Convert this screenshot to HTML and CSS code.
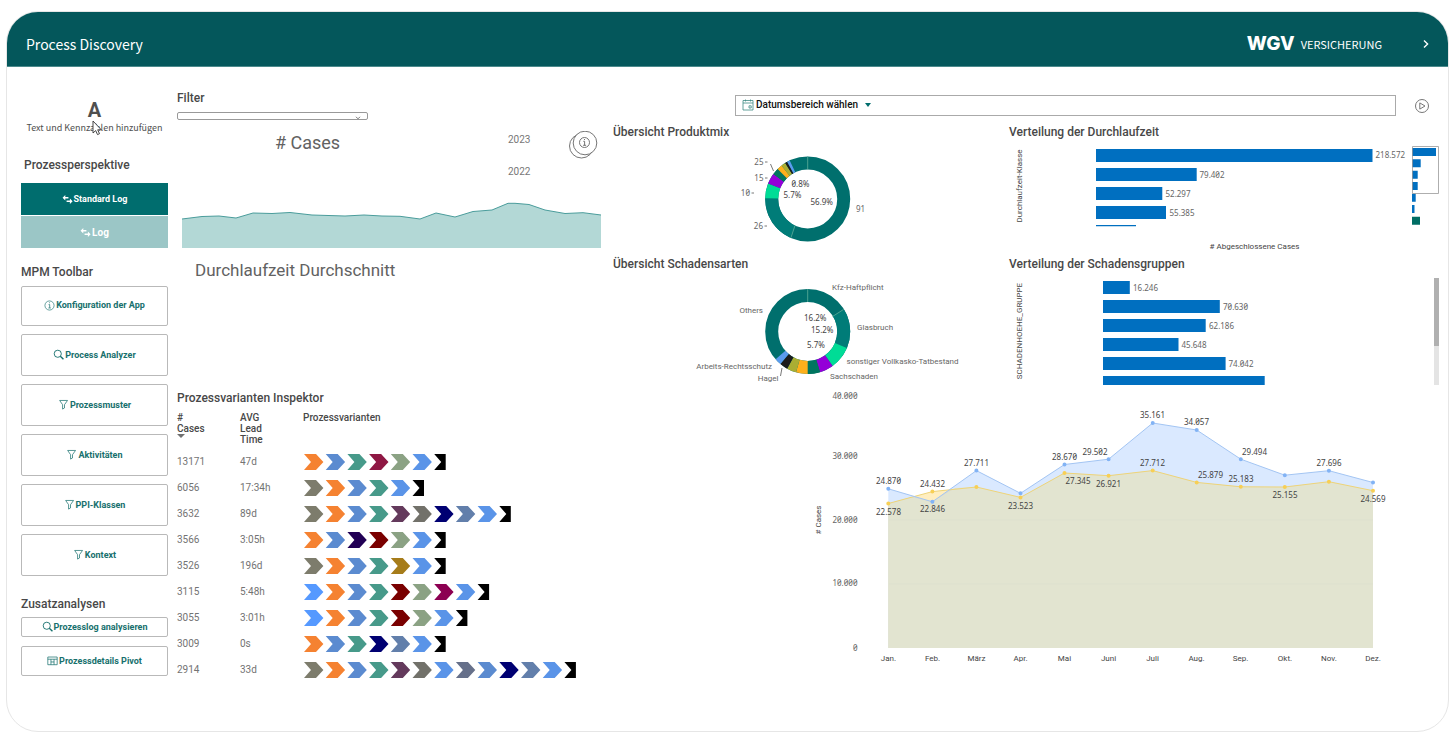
FILE: index.html
```html
<!DOCTYPE html>
<html lang="de">
<head>
<meta charset="utf-8">
<title>Process Discovery</title>
<link rel="stylesheet" href="styles.css">
</head>
<body>
<svg class="defs" aria-hidden="true">
  <symbol id="i-swap" viewBox="0 0 12 12"><path d="M3.600 1v2.200H7v1.600H3.600V7L.6 4zM8.600 5v2.200H5v1.600h3.600V11l3-3z" fill="currentColor"/></symbol>
  <symbol id="i-info" viewBox="0 0 12 12"><circle cx="6" cy="6" r="5" fill="none" stroke="currentColor" stroke-width=".7"/><path d="M5 5h1.200v3.600M4.800 8.700h2.600M5.600 3h.9" fill="none" stroke="currentColor" stroke-width=".8"/></symbol>
  <symbol id="i-search" viewBox="0 0 12 12"><circle cx="5.200" cy="5.200" r="3.900" fill="none" stroke="currentColor"/><path d="M8 8l3.400 3.200" stroke="currentColor" stroke-width="1.500"/></symbol>
  <symbol id="i-funnel" viewBox="0 0 12 12"><path d="M1.800 1.600h8.600L7.100 6.200v3.600L5 11V6.200z" fill="none" stroke="currentColor" stroke-width=".8"/></symbol>
  <symbol id="i-table" viewBox="0 0 12 12"><path d="M.9 2.200h10.200v8.400H.9zM.9 4.600h10.200M4.300 4.600v6M7.700 4.600v6M4.300 7.600h3.400" fill="none" stroke="currentColor" stroke-width=".8"/></symbol>
</svg>

<div class="app">
  <header class="topbar">
    <h1>Process Discovery</h1>
    <div class="brand"><strong>WGV</strong><span>VERSICHERUNG</span></div>
    <button class="next" aria-label="Weiter"><svg viewBox="0 0 8 10"><path d="M2 1.500L5.600 5 2 8.500" fill="none" stroke="#fff" stroke-width="1.400"/></svg></button>
  </header>

  <main class="sheet">
    <aside class="side">
      <div class="placeholder">
        <b>A</b>
        <p>Text und Kennzahlen hinzufügen</p>
        <svg class="cursor" viewBox="0 0 10 16"><path d="M1 1v12l2.700-2.400 1.800 4 2-.9-1.800-3.900h3.600z" fill="#fff" stroke="#333" stroke-width=".9"/></svg>
      </div>
      <h2 class="indent">Prozessperspektive</h2>
      <div class="logs">
        <button class="log on"><svg><use href="#i-swap"/></svg>Standard Log</button>
        <button class="log large"><svg><use href="#i-swap"/></svg>Log</button>
      </div>
      <h2 class="spaced">MPM Toolbar</h2>
      <div class="tools">
        <button class="tool first"><svg><use href="#i-info"/></svg>Konfiguration der App</button>
        <button class="tool"><svg><use href="#i-search"/></svg>Process Analyzer</button>
        <button class="tool"><svg><use href="#i-funnel"/></svg>Prozessmuster</button>
        <button class="tool"><svg><use href="#i-funnel"/></svg>Aktivitäten</button>
        <button class="tool"><svg><use href="#i-funnel"/></svg>PPI-Klassen</button>
        <button class="tool"><svg><use href="#i-funnel"/></svg>Kontext</button>
      </div>
      <h2 class="spaced">Zusatzanalysen</h2>
      <div class="extras">
        <button class="tool slim"><svg><use href="#i-search"/></svg>Prozesslog analysieren</button>
        <button class="tool medium"><svg><use href="#i-table"/></svg>Prozessdetails Pivot</button>
      </div>
    </aside>

    <section class="middle">
      <h2><label for="filter">Filter</label></h2>
      <div class="filter">
        <select id="filter"></select>
        <svg viewBox="0 0 6 4"><path d="M1 .8l2 2 2-2" fill="none" stroke="#555" stroke-width=".8"/></svg>
      </div>
      <div class="kpi">
        <h3># Cases</h3>
        <ul class="years"><li>2023</li><li>2022</li></ul>
        <button class="info" aria-label="Info"><svg viewBox="0 0 30 28"><g fill="#fff" stroke="#666" stroke-width=".9"><circle cx="12.500" cy="15" r="12"/><circle cx="16" cy="12" r="11.800"/><circle cx="15.500" cy="11.500" r="5"/></g><path d="M14.300 10.300h1.300v4M14.100 14.300h3M15 8.500h1" fill="none" stroke="#666" stroke-width=".9"/></svg></button>
      </div>
      <svg class="chart" viewBox="177 200 427 50" role="img" aria-label="Cases Verlauf">
        <path d="M182 248V219L202 216.500L219 216L236 218L253 213L272 213.500L290 212.500L312 215L345 216L364 215L382 216L400 216.300L420 219L436 213L455 217L473 211.500L492 210L508 203.300L515 203.300L529 204.500L545 210L565 213.500L583 212.700L601 215V248z" fill="#b3d8d6"/>
        <path d="M182 219L202 216.500L219 216L236 218L253 213L272 213.500L290 212.500L312 215L345 216L364 215L382 216L400 216.300L420 219L436 213L455 217L473 211.500L492 210L508 203.300L515 203.300L529 204.500L545 210L565 213.500L583 212.700L601 215" fill="none" stroke="#4a9c9b"/>
      </svg>
      <h3 class="lead">Durchlaufzeit Durchschnitt</h3>
      <h2>Prozessvarianten Inspektor</h2>
      <table class="variants">
        <thead><tr><th># Cases<i class="sort"></i></th><th>AVG Lead Time</th><th>Prozessvarianten</th></tr></thead>
        <tbody id="variants"></tbody>
      </table>
    </section>

    <section class="right">
      <div class="daterow">
        <button class="datebar"><svg class="cal" viewBox="0 0 12 12"><path d="M1 1.500h10v9.500H1zM1 4h10M3.500 .5v2M8.500 .5v2M7 6.800h2.200v2.200H7z" fill="none" stroke="#3d8a84" stroke-width=".8"/></svg>Datumsbereich wählen<svg class="caret" viewBox="0 0 6 4"><path d="M0 0h6L3 4z" fill="#006d6d"/></svg></button>
        <button class="play" aria-label="Abspielen"><svg viewBox="0 0 16 16"><circle cx="8" cy="8" r="6.500" fill="none" stroke="#777"/><path d="M5.800 4.900v6.200L11 8z" fill="none" stroke="#777"/></svg></button>
      </div>

      <div class="cards">
        <article>
          <h2>Übersicht Produktmix</h2>
          <svg class="chart" viewBox="613 142 387 112" role="img" aria-label="Übersicht Produktmix">
            <g class="ring" transform="rotate(-90 807.700 199)">
              <circle cx="807.700" cy="199" r="36" pathLength="360" stroke="#006f6d"/>
              <circle cx="807.700" cy="199" r="36" pathLength="360" stroke="#007c78" stroke-dasharray="66 294" stroke-dashoffset="-205"/>
              <circle cx="807.700" cy="199" r="36" pathLength="360" stroke="#00dc96" stroke-dasharray="20.500 339.500" stroke-dashoffset="-271"/>
              <circle cx="807.700" cy="199" r="36" pathLength="360" stroke="#9400d8" stroke-dasharray="14.500 345.500" stroke-dashoffset="-291.500"/>
              <circle cx="807.700" cy="199" r="36" pathLength="360" stroke="#00755f" stroke-dasharray="9 351" stroke-dashoffset="-306"/>
              <circle cx="807.700" cy="199" r="36" pathLength="360" stroke="#fdb01c" stroke-dasharray="7 353" stroke-dashoffset="-315"/>
              <circle cx="807.700" cy="199" r="36" pathLength="360" stroke="#aaae33" stroke-dasharray="6 354" stroke-dashoffset="-322"/>
              <circle cx="807.700" cy="199" r="36" pathLength="360" stroke="#1c1c1c" stroke-dasharray="3 357" stroke-dashoffset="-328"/>
              <circle cx="807.700" cy="199" r="36" pathLength="360" stroke="#5a9bee" stroke-dasharray="4 356" stroke-dashoffset="-331"/>
            </g>
            <path d="M807.700 156.500v13M791 237.500l4-12" stroke="#5fb09a" stroke-width=".8"/>
            <path d="M770.500 164l3 7M765 162h2.500M765 178h2.500M751.500 193h2.500M764.500 226h2.500" stroke="#555" stroke-width=".8" fill="none"/>
            <g class="num"><text x="763.500" y="165" text-anchor="end">25</text><text x="763.500" y="181" text-anchor="end">15</text><text x="750" y="196" text-anchor="end">10</text><text x="763" y="229" text-anchor="end">26</text><text x="856" y="212">91</text><text class="d" x="791.500" y="187">0.8%</text><text class="d" x="783.500" y="198">5.7%</text><text class="d" x="810.500" y="205">56.9%</text></g>
          </svg>
        </article>
        <article>
          <h2>Verteilung der Durchlaufzeit</h2>
          <svg class="chart" viewBox="1009 142 431 112" role="img" aria-label="Verteilung der Durchlaufzeit">
            <text class="axis" transform="translate(1022 186) rotate(-90)" text-anchor="middle">Durchlaufzeit-Klasse</text>
            <g fill="#006fc0"><path d="M1096 149h276.500v13H1096zM1096 168h100.700v13H1096zM1096 187h66.300v13H1096zM1096 206h70v13H1096zM1096 225h40v1.300H1096z"/><path d="M1412 148h24v8h-24zM1412 159.300h8.700v8H1412zM1412 170.700h5.700v8H1412zM1412 182h5.700v8H1412zM1412 193.700h3.700v8H1412zM1412 205h2.500v8H1412z"/></g>
            <path d="M1412 216.700h8v8h-8z" fill="#006d64"/>
            <path d="M1412.500 146.500h26v47h-26z" fill="none" stroke="#999" stroke-width=".8"/>
            <g class="num"><text x="1375.500" y="158">218.572</text><text x="1199.500" y="177.500">79.402</text><text x="1165.500" y="196.500">52.297</text><text x="1169.500" y="215.500">55.385</text></g>
            <text class="axis" x="1254.500" y="249" text-anchor="middle"># Abgeschlossene Cases</text>
          </svg>
        </article>
        <article>
          <h2>Übersicht Schadensarten</h2>
          <svg class="chart" viewBox="613 274 387 114" role="img" aria-label="Übersicht Schadensarten">
            <g class="ring" transform="rotate(-90 807.700 331.500)">
              <circle cx="807.700" cy="331.500" r="36" pathLength="360" stroke="#006f6d"/>
              <circle cx="807.700" cy="331.500" r="36" pathLength="360" stroke="#007c78" stroke-dasharray="54 306" stroke-dashoffset="-59"/>
              <circle cx="807.700" cy="331.500" r="36" pathLength="360" stroke="#00dc96" stroke-dasharray="31 329" stroke-dashoffset="-113"/>
              <circle cx="807.700" cy="331.500" r="36" pathLength="360" stroke="#9400d8" stroke-dasharray="19 341" stroke-dashoffset="-144"/>
              <circle cx="807.700" cy="331.500" r="36" pathLength="360" stroke="#00755f" stroke-dasharray="17 343" stroke-dashoffset="-163"/>
              <circle cx="807.700" cy="331.500" r="36" pathLength="360" stroke="#fdb01c" stroke-dasharray="16 344" stroke-dashoffset="-180"/>
              <circle cx="807.700" cy="331.500" r="36" pathLength="360" stroke="#aaae33" stroke-dasharray="13 347" stroke-dashoffset="-196"/>
              <circle cx="807.700" cy="331.500" r="36" pathLength="360" stroke="#1c1c1c" stroke-dasharray="11 349" stroke-dashoffset="-209"/>
              <circle cx="807.700" cy="331.500" r="36" pathLength="360" stroke="#5a9bee" stroke-dasharray="9 351" stroke-dashoffset="-220"/>
            </g>
            <path d="M807.700 289v13M843.500 309.500l-11 7" stroke="#5fb09a" stroke-width=".8"/>
            <path d="M780.500 376l1.500-8" stroke="#555" stroke-width=".8"/>
            <g class="lab"><text x="832" y="290">Kfz-Haftpflicht</text><text x="857" y="330">Glasbruch</text><text x="846.500" y="364">sonstiger Vollkasko-Tatbestand</text><text x="830" y="378.500">Sachschaden</text><text x="763" y="312.500" text-anchor="end">Others</text><text x="772" y="368.500" text-anchor="end">Arbeits-Rechtsschutz</text><text x="778.500" y="380.500" text-anchor="end">Hagel</text></g>
            <g class="num"><text class="d" x="804" y="321">16.2%</text><text class="d" x="811" y="332.500">15.2%</text><text class="d" x="807" y="348">5.7%</text></g>
          </svg>
        </article>
        <article>
          <h2>Verteilung der Schadensgruppen</h2>
          <svg class="chart" viewBox="1009 274 431 114" role="img" aria-label="Verteilung der Schadensgruppen">
            <text class="axis" transform="translate(1022 331) rotate(-90)" text-anchor="middle">SCHADENHOEHE_GRUPPE</text>
            <path d="M1103 281h26.800v13H1103zM1103 300h116.800v13H1103zM1103 319h102.700v13H1103zM1103 338h75.500v13H1103zM1103 357h122.600v13H1103zM1103 376h161.700v9H1103z" fill="#006fc0"/>
            <g class="num"><text x="1133" y="290.500">16.246</text><text x="1223" y="310">70.630</text><text x="1209" y="329">62.186</text><text x="1181.500" y="348">45.648</text><text x="1228.500" y="367">74.042</text></g>
            <path d="M1434 278h5v107h-5z" fill="#e4e4e4"/><path d="M1434 278h5v68h-5z" fill="#b0b0b0"/>
          </svg>
        </article>
      </div>

      <svg class="chart" viewBox="613 388 827 280" role="img" aria-label="Cases pro Monat">
        <path d="M888.300 648V503.500L932.400 491.600L976.400 487L1020.500 497.400L1064.500 473L1108.600 475.700L1152.700 470.600L1196.700 482.400L1240.800 486.800L1284.800 487L1328.900 481.700L1373 490.700V648z" fill="#ffcf4b" fill-opacity=".35"/>
        <path d="M888.300 648V488.800L932.400 501.800L976.400 470.600L1020.500 493.300L1064.500 464.500L1108.600 459.200L1152.700 423L1196.700 430L1240.800 459.200L1284.800 475.200L1328.900 470.700L1373 482.500V648z" fill="#7ab1ff" fill-opacity=".28"/>
        <path d="M888.300 648V503.500L911 497L932.400 501.800L955 488L976.400 487L1020.500 497.400L1064.500 473L1108.600 475.700L1152.700 470.600L1196.700 482.400L1240.800 486.800L1284.800 487L1328.900 481.700L1373 490.700V648z" fill="#e2e4d0"/>
        <path d="M889 520h484M889 584h484" stroke="#dcdecd" stroke-width=".6"/>
        <path d="M888.300 503.500L932.400 491.600L976.400 487L1020.500 497.400L1064.500 473L1108.600 475.700L1152.700 470.600L1196.700 482.400L1240.800 486.800L1284.800 487L1328.900 481.700L1373 490.700" fill="none" stroke="#eed47a"/>
        <path d="M888.300 488.800L932.400 501.800L976.400 470.600L1020.500 493.300L1064.500 464.500L1108.600 459.200L1152.700 423L1196.700 430L1240.800 459.200L1284.800 475.200L1328.900 470.700L1373 482.500" fill="none" stroke="#a3c5f3"/>
        <path class="dots" stroke="#f7cf55" d="M888.300 503.500h0M932.400 491.600h0M976.400 487h0M1020.500 497.400h0M1064.500 473h0M1108.600 475.700h0M1152.700 470.600h0M1196.700 482.400h0M1240.800 486.800h0M1284.800 487h0M1328.900 481.700h0M1373 490.700h0"/>
        <path class="dots" stroke="#82b3f5" d="M888.300 488.800h0M932.400 501.800h0M976.400 470.600h0M1020.500 493.300h0M1064.500 464.500h0M1108.600 459.200h0M1152.700 423h0M1196.700 430h0M1240.800 459.200h0M1284.800 475.200h0M1328.900 470.700h0M1373 482.500h0"/>
        <g class="num" text-anchor="end"><text x="857.500" y="399">40.000</text><text x="857.500" y="459">30.000</text><text x="857.500" y="522.500">20.000</text><text x="857.500" y="586">10.000</text><text x="857.500" y="651">0</text></g>
        <g class="num d" text-anchor="middle"><text x="888.500" y="483.500">24.870</text><text x="888.500" y="514.500">22.578</text><text x="932.500" y="486.500">24.432</text><text x="932.500" y="512">22.846</text><text x="976.500" y="466">27.711</text><text x="1020.500" y="508.500">23.523</text><text x="1064.500" y="459.500">28.670</text><text x="1095" y="454.500">29.502</text><text x="1078" y="484">27.345</text><text x="1108.500" y="487">26.921</text><text x="1152.500" y="418">35.161</text><text x="1152.500" y="466">27.712</text><text x="1196.500" y="425">34.057</text><text x="1210.500" y="478">25.879</text><text x="1241" y="482">25.183</text><text x="1254.500" y="454.500">29.494</text><text x="1285" y="498">25.155</text><text x="1329" y="466">27.696</text><text x="1373" y="502">24.569</text></g>
        <g class="axis" text-anchor="middle"><text x="888.500" y="661">Jan.</text><text x="932.500" y="661">Feb.</text><text x="976.500" y="661">März</text><text x="1020.500" y="661">Apr.</text><text x="1064.500" y="661">Mai</text><text x="1108.500" y="661">Juni</text><text x="1152.500" y="661">Juli</text><text x="1196.500" y="661">Aug.</text><text x="1240.500" y="661">Sep.</text><text x="1285" y="661">Okt.</text><text x="1329" y="661">Nov.</text><text x="1373" y="661">Dez.</text></g>
        <text class="axis" transform="translate(821 520) rotate(-90)" text-anchor="middle"># Cases</text>
      </svg>
    </section>
  </main>
</div>
<script src="app.js"></script>
</body>
</html>
```
FILE: styles.css
```css
* { box-sizing: border-box; }
body { margin: 0; background: #fff; color: #4f4f4f; font-family: Roboto, sans-serif; font-size: 10px; }
h1, h2, h3, p, ul { margin: 0; padding: 0; list-style: none; }
button { border: 0; padding: 0; background: none; font: inherit; color: inherit; }
svg { display: block; }
.defs { position: absolute; width: 0; height: 0; }

.app { margin: 11px 6px; border: 1px solid #e6e6e6; border-radius: 32px; overflow: hidden; padding-bottom: 48px; }
.topbar { display: flex; align-items: center; height: 55px; padding: 10px 18px 0 19px; background: #04575b; color: #fff; border-bottom: 1px solid #4c8a8c; }
.topbar h1 { flex: 1; font: 400 14px "Noto Sans CJK JP", sans-serif; line-height: 20px; }
.brand { display: flex; align-items: center; gap: 6px; margin-right: 40px; }
.brand strong { font: 800 19px/20px Inter, sans-serif; }
.brand span { font: 400 11px/20px "Noto Sans CJK JP", sans-serif; }
.next svg { width: 8px; height: 10px; }

.sheet { display: grid; grid-template-columns: 147px minmax(0, 427fr) minmax(0, 827fr); gap: 9px; padding: 0 8px 0 14px; }
h2 { font-size: 12px; line-height: 20px; font-weight: 500; color: #484848; }

.side { padding-top: 32px; }
.placeholder { position: relative; height: 56px; text-align: center; }
.placeholder b { display: block; font-size: 20px; line-height: 23px; }
.placeholder p { font: 400 9px/11px "Noto Sans CJK JP", sans-serif; white-space: nowrap; }
.cursor { position: absolute; left: 71px; top: 21px; width: 10px; height: 16px; }
.indent { padding-left: 3px; }
.logs { display: grid; gap: 1px; margin-top: 8px; }
.log, .tool { display: flex; align-items: center; justify-content: center; gap: 1px; width: 100%; font-size: 9px; font-weight: 700; }
.log { height: 32px; background: #9bc6c6; color: #fff; }
.log.on { background: #006d6e; }
.log.large { font-size: 10px; }
.log svg, .tool svg { width: 11px; height: 11px; }
.spaced { margin-top: 14px; }
.tools { display: grid; gap: 8px; margin-top: 4px; }
.tool { height: 42px; padding-bottom: 1px; border: 1px solid #b9b9b9; border-radius: 2px; color: #17706d; }
.tool.first { height: 40px; padding-bottom: 2px; }
.tools + .spaced { margin-top: 18px; }
.extras { display: grid; gap: 9px; margin-top: 3px; }
.tool.slim { height: 20px; }
.tool.medium { height: 30px; }

.middle { padding-top: 21px; }
.filter { position: relative; width: 191px; margin-top: 4px; }
.filter select { display: block; appearance: none; width: 100%; height: 8px; border: 1px solid #999; border-radius: 2px; background: #fff; }
.filter svg { position: absolute; right: 7px; top: 4px; width: 6px; height: 4px; }
.kpi { display: grid; grid-template-columns: minmax(0, 331fr) minmax(0, 61fr) minmax(0, 35fr); height: 80px; padding-top: 11px; }
.kpi h3 { padding: 0 70px 0 0; text-align: center; }
h3 { font-size: 18px; line-height: 24px; font-weight: 400; color: #626262; }
.years { display: grid; align-content: start; gap: 20px; line-height: 12px; padding-top: 3px; color: #777; }
.info { align-self: start; }
.info svg { width: 30px; height: 28px; }
.chart { width: 100%; height: auto; }
.lead { padding-left: 18px; margin: 8px 0 106px; font-size: 17px; }

.variants { width: 100%; table-layout: fixed; border-collapse: collapse; margin-top: 4px; color: #737373; }
.variants th { height: 37px; padding: 0 30px 0 0; vertical-align: top; text-align: left; line-height: 11px; font-weight: 500; color: #484848; }
.variants th:nth-child(1), .variants th:nth-child(2) { width: 63px; }
.variants td { height: 26px; padding: 0; line-height: 12px; }
.variants svg { width: 290px; height: 16px; margin-left: 1px; }
.sort { display: block; width: 8px; height: 4px; background: #707070; clip-path: polygon(0 0, 100% 0, 50% 100%); }

.right { padding-top: 28px; }
.daterow { display: flex; align-items: center; padding-left: 122px; }
.datebar { flex: 1; display: flex; align-items: center; height: 21px; padding: 0 6px 2px; border: 1px solid #aaa; color: #111; font-weight: 500; }
.cal { width: 12px; height: 12px; margin-right: 2px; }
.caret { width: 6px; height: 4px; margin-left: 7px; }
.play { margin: 0 10px 0 18px; }
.play svg { width: 16px; height: 16px; }
.cards { display: grid; grid-template-columns: minmax(0, 387fr) minmax(0, 431fr); column-gap: 9px; margin-top: 6px; }
.ring circle { fill: none; stroke-width: 13; }
.num { font-family: "Noto Sans", sans-serif; font-size: 8px; font-variant-numeric: slashed-zero; fill: #666; }
.lab, .axis { font-size: 8px; fill: #666; }
.axis { fill: #444; }
.d { fill: #444; }
.dots { fill: none; stroke-width: 4; stroke-linecap: round; }
```
FILE: app.js
```js
const colors = {
  o: '#f58231', b: '#5b8bd0', t: '#479a8a', c: '#8f1844', s: '#8ba284', l: '#5a94e8',
  g: '#7d7c6c', h: '#72716a', p: '#643a5c', n: '#000072', e: '#627fab', d: '#220055',
  m: '#7a0000', y: '#a67c1a', k: '#5599ff', v: '#8c0052', w: '#66708a'
};
const rows = [
  ['13171', '47d', 'obtcsl'],
  ['6056', '17:34h', 'gobtl'],
  ['3632', '89d', 'gobtphnel'],
  ['3566', '3:05h', 'obdmsl'],
  ['3526', '196d', 'gobtyl'],
  ['3115', '5:48h', 'kobtmsvl'],
  ['3055', '3:01h', 'kobtmsl'],
  ['3009', '0s', 'obtnel'],
  ['2914', '33d', 'gobtphlwbnel']
];
const step = 21.7;
const arrow = (x, fill) => `<path transform="translate(${x} 0)" d="M0 0H12L19.400 8L12 16H0L7 8z" fill="${fill}"/>`;
const end = x => `<path transform="translate(${x} 0)" d="M0 0H11.500V16H0L7 8z" fill="#000"/>`;
document.getElementById('variants').innerHTML = rows.map(([cases, time, steps]) => {
  const shapes = [...steps].map((s, i) => arrow(i * step, colors[s])).join('') + end(steps.length * step);
  return `<tr><td>${cases}</td><td>${time}</td><td><svg viewBox="0 0 290 16">${shapes}</svg></td></tr>`;
}).join('');
```
